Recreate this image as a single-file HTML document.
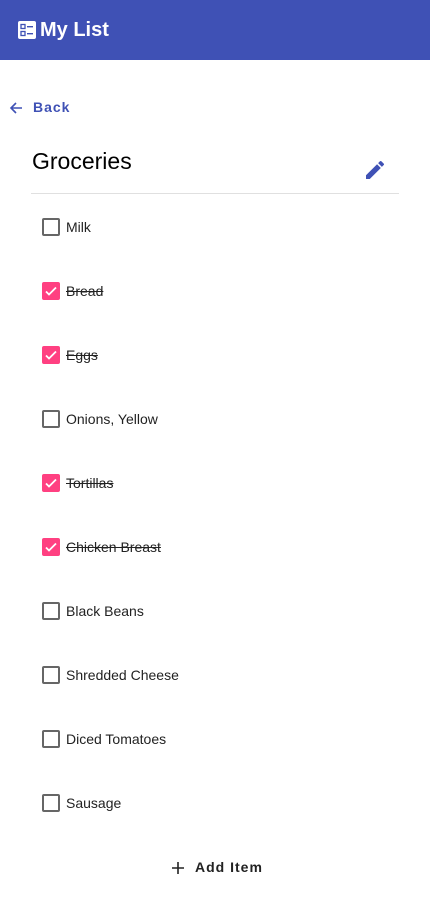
<!DOCTYPE html>
<html><head><meta charset="utf-8"><style>
*{margin:0;padding:0;box-sizing:border-box}
body{width:430px;height:901px;background:#fff;font-family:"Liberation Sans",Roboto,sans-serif;position:relative;overflow:hidden;color:#212121}
.hdr{position:absolute;left:0;top:0;width:430px;height:60px;background:#3f51b5}
.hdr .t{position:absolute;left:40px;top:19px;color:#fff;font-size:20px;font-weight:bold}
.back{position:absolute;left:9px;top:99px;color:#3f51b5;font-size:14px;font-weight:bold;letter-spacing:1px}
.back span{position:absolute;left:24px;top:0;white-space:nowrap}
h1{position:absolute;left:32px;top:148px;font-size:23px;font-weight:normal;color:#000}
.div{position:absolute;left:31px;top:193px;width:368px;height:1px;background:#e0e0e0}
.row{position:absolute;left:42px;height:18px}
.cb{position:absolute;left:0;top:0;width:18px;height:18px;border:2px solid #666;border-radius:2px}
.cb.on{background:#ff4081;border-color:#ff4081}
.row .l{position:absolute;left:24px;top:0;font-size:14px;line-height:18px;white-space:nowrap;color:#222}
.row .l.s{text-decoration:line-through}
.add{position:absolute;left:172px;top:859px;font-size:14px;font-weight:bold;letter-spacing:1px;color:#222}
</style></head><body>
<div class="hdr">
<svg style="position:absolute;left:18px;top:21px" width="18" height="18" viewBox="0 0 18 18"><rect x="0" y="0" width="18" height="18" rx="2" fill="#fff"/><rect x="3" y="3.5" width="4" height="4" fill="none" stroke="#3f51b5" stroke-width="1.3"/><rect x="3" y="10.5" width="4" height="4" fill="none" stroke="#3f51b5" stroke-width="1.3"/><rect x="9" y="5" width="6" height="1.4" fill="#3f51b5"/><rect x="9" y="12" width="6" height="1.4" fill="#3f51b5"/></svg>
<div class="t">My List</div></div>
<div class="back"><svg style="position:absolute;left:0;top:2px" width="14" height="14" viewBox="0 0 14 14"><path d="M13 7H2M7 2L2 7l5 5" fill="none" stroke="#3f51b5" stroke-width="1.6"/></svg><span>Back</span></div>
<h1>Groceries</h1>
<svg style="position:absolute;left:363px;top:158px" width="24" height="24" viewBox="0 0 24 24"><path fill="#3f51b5" d="M3 17.25V21h3.75L17.81 9.940l-3.75-3.75L3 17.25zM20.71 7.04a1 1 0 0 0 0-1.41l-2.34-2.34a1 1 0 0 0-1.41 0l-1.83 1.830 3.75 3.75 1.83-1.83z"/></svg>
<div class="div"></div>
<div class="row" style="top:218px"><div class="cb"></div><div class="l">Milk</div></div>
<div class="row" style="top:282px"><div class="cb on"><svg width="14" height="14" viewBox="0 0 14 14"><path d="M2 7.5l3 3 7-7" fill="none" stroke="#fff" stroke-width="1.8"/></svg></div><div class="l s">Bread</div></div>
<div class="row" style="top:346px"><div class="cb on"><svg width="14" height="14" viewBox="0 0 14 14"><path d="M2 7.5l3 3 7-7" fill="none" stroke="#fff" stroke-width="1.8"/></svg></div><div class="l s">Eggs</div></div>
<div class="row" style="top:410px"><div class="cb"></div><div class="l">Onions, Yellow</div></div>
<div class="row" style="top:474px"><div class="cb on"><svg width="14" height="14" viewBox="0 0 14 14"><path d="M2 7.5l3 3 7-7" fill="none" stroke="#fff" stroke-width="1.8"/></svg></div><div class="l s">Tortillas</div></div>
<div class="row" style="top:538px"><div class="cb on"><svg width="14" height="14" viewBox="0 0 14 14"><path d="M2 7.5l3 3 7-7" fill="none" stroke="#fff" stroke-width="1.8"/></svg></div><div class="l s">Chicken Breast</div></div>
<div class="row" style="top:602px"><div class="cb"></div><div class="l">Black Beans</div></div>
<div class="row" style="top:666px"><div class="cb"></div><div class="l">Shredded Cheese</div></div>
<div class="row" style="top:730px"><div class="cb"></div><div class="l">Diced Tomatoes</div></div>
<div class="row" style="top:794px"><div class="cb"></div><div class="l">Sausage</div></div>
<div class="add"><svg style="position:absolute;left:0;top:3px" width="12" height="12" viewBox="0 0 12 12"><path d="M6 0v12M0 6h12" stroke="#222" stroke-width="1.6"/></svg><span style="position:absolute;left:23px;top:0;white-space:nowrap">Add Item</span></div>
</body></html>
